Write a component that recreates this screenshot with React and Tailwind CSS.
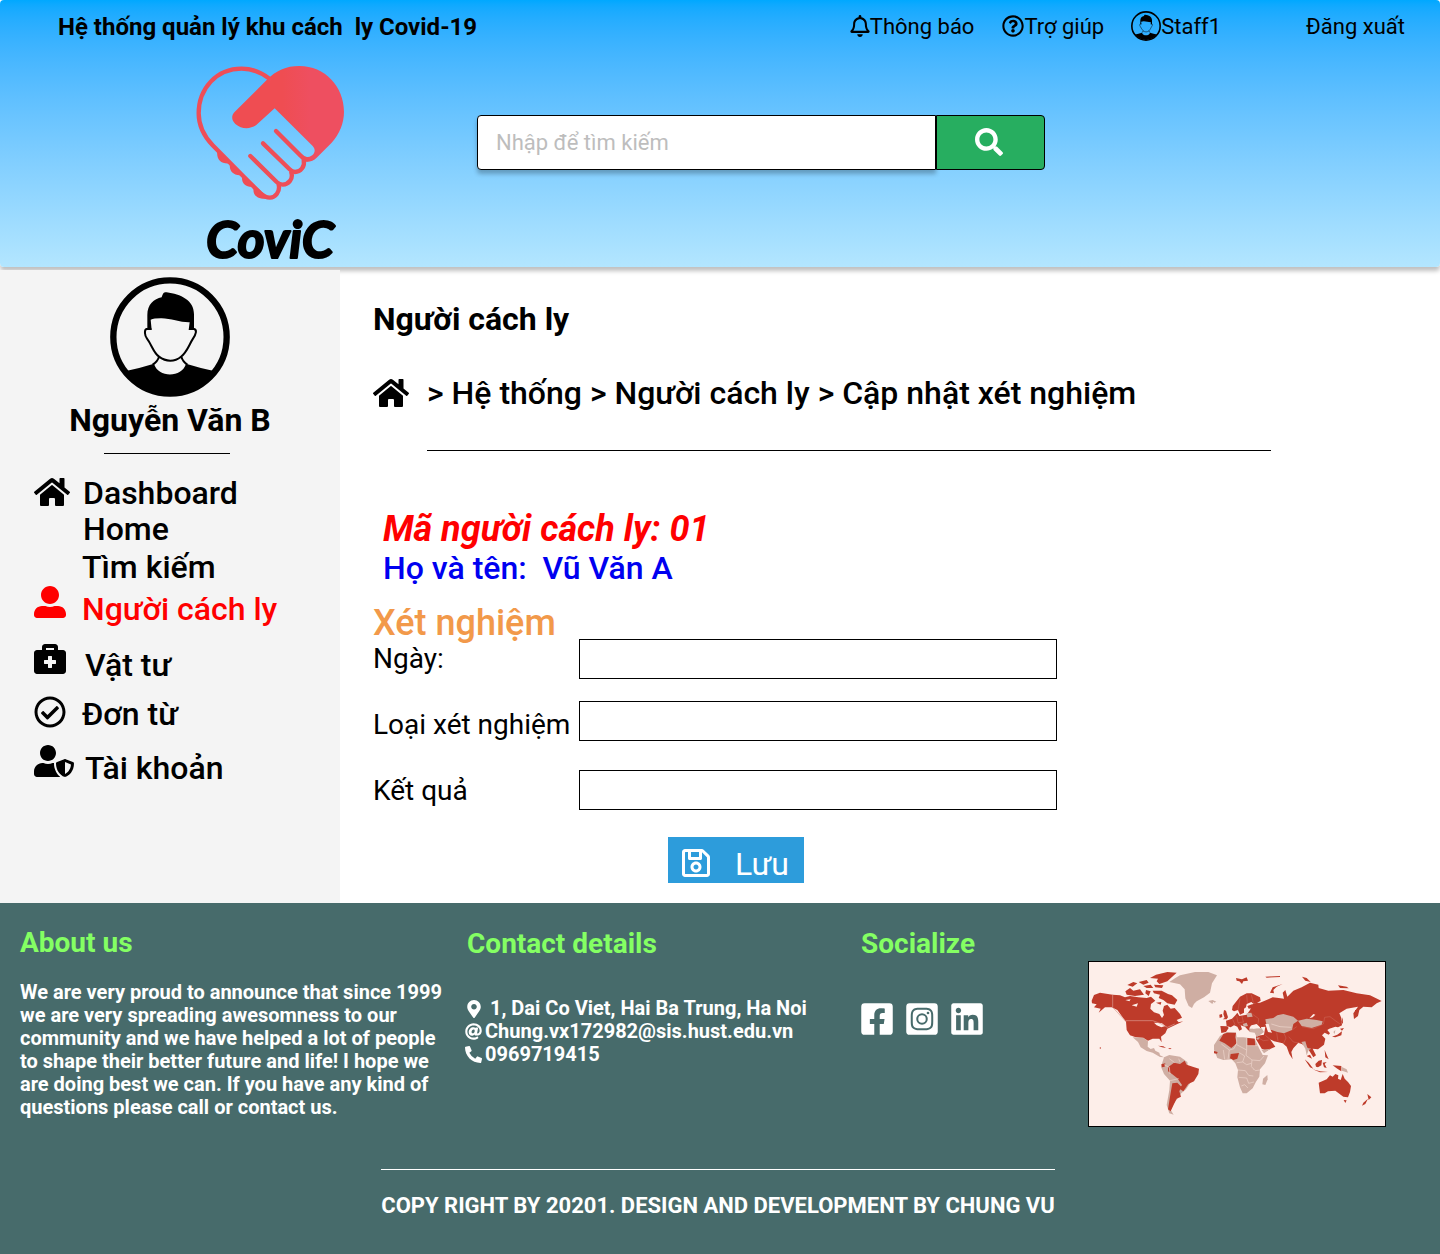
import {
  FaAt,
  FaBriefcaseMedical,
  FaFacebookSquare,
  FaHome,
  FaInstagramSquare,
  FaLinkedin,
  FaMapMarkerAlt,
  FaPhoneAlt,
  FaRegBell,
  FaRegCheckCircle,
  FaRegQuestionCircle,
  FaRegSave,
  FaSearch,
  FaUserAlt,
  FaUserShield,
} from "react-icons/fa";

function Avatar({ className }) {
  return (
    <svg viewBox="60 36 360 360" className={className} aria-hidden="true">
      <circle cx="240" cy="216" r="170" fill="none" stroke="#000" strokeWidth="19" />
      <path d="M172 195V150C172 118 192 102 215 97C219 84 222 81 230 82C272 88 312 105 312 148V195H296L299 172C272 173 240 159 212 160Q192 160 182 164L185 195Z" />
      <path
        d="M184 192H170C162 194 164 212 171 221C186 241 190 262 207 275C228 291 254 291 273 275C292 260 296 241 309 221C318 208 322 194 312 192H298M207 275Q203 289 188 299M274 275Q278 289 292 299"
        fill="none"
        stroke="#000"
        strokeWidth="6"
      />
      <path d="M108 318Q150 309 192 296C204 339 276 339 288 296Q330 309 372 318A164 164 0 0 1 108 318Z" />
    </svg>
  );
}

function Logo() {
  return (
    <svg viewBox="0 12 540 639" className="h-[213px] w-[180px] shrink-0 overflow-visible" role="img" aria-label="CoviC">
      <defs>
        <linearGradient id="hands" x1="0" x2="1">
          <stop offset="0.45" stopColor="#ef4d52" />
          <stop offset="0.7" stopColor="#ee4f60" />
        </linearGradient>
      </defs>
      <path
        fill="url(#hands)"
        d="M163 187L260 90C288 62 318 48 358 48C435 48 492 110 492 185C492 220 478 252 455 278L410 323C402 332 390 336 378 335L378 322C400 322 412 303 398 288L284 175L228 226C210 238 184 238 166 222C154 211 154 197 163 187Z"
      />
      <g fill="none" stroke="#ee4e58" strokeWidth="13" strokeLinecap="round">
        <path d="M268 86C245 68 215 56 185 56C110 56 56 115 56 190C56 230 73 260 98 286L240 429Q255 443 270 443C286 443 301 425 296 404" />
        <path d="M288 243L362 317Q370 327 382 328" />
        <path d="M249 280L328 357Q336 365 345 366C361 366 376 350 371 330" />
        <path d="M211 318L290 396Q299 404 308 404C326 403 340 387 334 368" />
      </g>
      <path
        fill="#ef4d55"
        d="M112 300C108 328 122 343 150 340C146 363 160 379 187 375C182 398 196 413 222 410C214 437 236 451 270 445L246 425Z"
      />
      <text
        x="270"
        y="624"
        textAnchor="middle"
        className="font-['Lato',sans-serif] text-[156px] font-bold italic"
        stroke="#000"
        strokeWidth="6"
        strokeLinejoin="round"
      >
        CoviC
      </text>
    </svg>
  );
}

function WorldMap() {
  return (
    <svg
      viewBox="27 36 888 492"
      className="block h-[166px] w-[298px] border border-black bg-[#fdeee9]"
      role="img"
      aria-label="World map"
    >
      <defs>
        <filter id="coast" x="0" y="0" width="1" height="1" filterUnits="objectBoundingBox">
          <feTurbulence type="fractalNoise" baseFrequency="0.35" numOctaves="2" seed="4" />
          <feDisplacementMap in="SourceGraphic" scale="4" xChannelSelector="R" yChannelSelector="G" />
        </filter>
      </defs>
      <g filter="url(#coast)">
        <rect x="27" y="36" width="888" height="492" fill="#fdeee9" />
        <g fill="#cfaea3">
          <path d="M268 96L286 84L300 76L345 66L385 66L411 76L396 100L390 128L372 142L350 154L342 162L336 174L326 168L316 145L314 118L300 103Z" />
          <path d="M385 153L398 150L409 155L396 161Z" />
          <path d="M158 262L190 263L204 274L203 290L212 297L222 294L226 302L238 308L240 316L252 322L240 321L218 308L200 303L182 292L174 276Z" />
          <path d="M252 322L268 315L300 320L322 336L330 400L318 418L304 430L285 455L272 480L281 494L268 490L260 465L268 420L270 392L252 372L243 350Z" />
          <path d="M402 300L402 285L420 258L440 246L468 248L470 262L490 262L524 266L538 296L548 315L564 316L555 340L540 358L538 380L528 395L518 415L500 430L488 430L480 412L472 382L474 360L466 340L455 328L430 330L412 324Z" />
          <path d="M562 375L563 388L556 405L547 403L549 386Z" />
        </g>
        <g fill="#be3b2b">
          <path d="M35 152L42 135L60 128L98 134L120 136L135 142L150 138L175 142L200 144L213 140L226 152L213 162L211 176L222 187L238 192L246 204L252 195L248 182L252 168L262 164L272 176L284 174L300 192L306 203L290 210L296 217L310 214L284 226L262 236L256 250L243 260L245 277L238 266L218 266L204 272L190 263L165 261L150 256L140 240L138 215L125 198L112 180L95 172L75 172L56 188L62 176L42 172L50 163L36 160Z" />
          <path d="M290 68L262 66L228 74L210 84L234 86L230 94L238 102L262 94Z" />
          <path d="M218 122L245 122L264 132L276 136L292 150L284 164L262 160L250 150L236 144L240 134L222 130Z" />
          <path d="M136 124L150 114L160 122L180 118L192 134L165 138L140 134ZM142 105L160 96L172 100L158 110ZM176 96L200 90L206 98L190 104ZM190 108L212 104L220 114L200 114ZM198 120L212 124L206 138L196 130ZM222 104L250 106L246 114L226 112ZM228 158L244 156L242 164Z" />
          <path d="M234 287L250 289L258 294L246 292ZM264 294L275 295L270 298Z" />
          <path d="M264 352L282 338L300 342L314 332L320 344L338 350L357 356L355 372L342 394L325 402L310 424L298 416L306 405L292 385L276 372L264 364Z" />
          <path d="M277 400L292 398L304 410L298 424L303 440L290 446L282 462L272 484L264 478L270 440Z" />
          <path d="M244 343L256 340L254 350L246 352Z" />
          <path d="M418 272L430 252L442 248L468 248L466 262L470 280L454 294L434 280Z" />
          <path d="M502 264L524 266L526 287L502 287Z" />
          <path d="M452 312L477 309L472 326L460 330L450 325ZM402 303L413 306L411 311L402 310Z" />
          <path d="M421 228L442 229L446 234L438 246L424 249ZM428 208L434 204L430 192L432 180L438 182L444 202L440 208ZM418 194L426 192L427 201L419 204Z" />
          <path d="M456 180L458 168L480 140L500 130L515 130L540 142L542 152L530 160L518 160L514 156L500 162L498 172L492 176L492 188L480 194L474 180L462 184Z" />
          <path d="M502 168L518 162L520 174L506 176ZM468 84L486 88L500 82L504 92L490 94L486 102L478 94L470 92Z" />
          <path d="M438 212L456 206L466 196L472 188L478 198L500 194L510 180L520 160L540 158L565 148L578 142L596 144L612 146L608 128L616 120L622 140L640 122L665 112L690 98L715 104L716 114L745 122L790 120L830 130L870 136L905 153L890 160L875 172L850 170L838 180L834 198L822 207L820 190L834 170L800 176L778 190L784 204L786 226L774 232L766 230L748 236L742 240L750 250L746 254L734 248L726 256L736 266L732 284L714 298L698 296L708 316L700 322L690 306L680 290L665 282L655 278L640 295L634 306L638 328L628 312L620 290L608 280L582 274L570 268L586 290L560 302L545 296L528 268L528 258L552 254L556 230L540 232L530 222L515 226L508 234L512 246L504 240L495 230L482 226L486 238L478 242L472 230L462 226L452 232L440 228Z" />
          <path d="M570 128L578 112L608 102L590 110L580 120L582 130ZM666 80L680 84L692 96L676 92ZM774 106L800 110L806 115L780 114ZM556 80L600 78L600 81L560 83Z" />
          <path d="M788 202L789 222L784 216ZM780 236L792 234L786 242ZM786 244L784 256L766 262L756 260L772 254Z" />
          <path d="M674 328L686 338L700 356L690 352ZM698 358L720 364L744 366L720 367ZM706 342L716 332L726 330L724 346L714 352L708 350ZM728 338L740 336L734 342L740 354L732 352ZM758 346L784 348L784 364L772 356ZM734 300L738 310L746 328L736 322ZM680 318L690 314L696 326Z" />
          <path d="M716 398L740 388L750 376L758 380L766 372L775 376L774 386L782 390L788 372L794 386L804 396L813 408L810 426L804 442L790 440L776 430L766 422L744 424L734 430L720 430ZM791 450L800 451L796 459ZM862 432L874 442L866 450ZM864 446L856 462L846 467L850 458Z" />
          <circle cx="61" cy="294" r="2" />
        </g>
        <g fill="#cfaea3">
          <path d="M508 236L545 235L552 246L544 252L530 262L524 248L508 246Z" />
          <path d="M500 190L514 188L518 200L502 202ZM488 222L500 218L504 228L492 230Z" />
          <path d="M556 208L580 204L592 196L610 192L640 200L654 212L640 222L636 240L612 250L592 246L575 240L562 238Z" />
          <path d="M654 212L680 206L710 210L728 214L725 224L695 234L665 228Z" />
          <path d="M544 299L572 296L552 310ZM664 276L676 274L682 294L694 296L686 300L680 316L676 296ZM784 350L800 358L804 368L786 362ZM760 246L766 240L764 252Z" />
          <path d="M528 264L540 262L534 270Z" />
        </g>
        <g fill="#fdeee9">
          <path d="M556 222L566 222L570 236L576 248L564 246ZM510 228L528 224L538 232L520 236ZM706 194L698 202L688 205L700 192ZM222 218L246 220L256 228L244 232L230 226ZM155 166L174 160L170 170ZM136 150L152 148L148 154Z" />
        </g>
        <path
          d="M98 134V172M138 212H218L240 220L262 232L284 222M138 215L98 172"
          fill="none"
          stroke="#dd9b8f"
          strokeWidth="2"
        />
        <path
          d="M424 282L448 300L462 296L470 280M470 262V284L500 300V264M500 287H534M430 300L434 328M448 300L444 328M478 308L494 318L488 336L470 338M500 300L498 316L516 330L540 332L552 318M516 330L514 350L526 362L540 360M474 360L496 362L506 376L520 378M476 382L500 384L506 400L522 396M484 408L494 404L504 414M488 336L500 344L514 340M252 344L268 352L270 372M270 392L296 386M268 326L284 338M296 326L300 336M574 222L600 230L634 232"
          fill="none"
          stroke="#eed6cd"
          strokeWidth="2"
        />
        <path
          d="M458 208L466 226M470 198L474 218L492 216M486 198L490 216M474 218L482 226M514 190L536 206L534 222M480 146L474 180M500 134L502 158M514 134L520 158M556 256L570 268M590 248L594 274M612 250L618 264L610 282M626 260L640 276L664 280M636 240L650 230M666 230L700 236L730 222L734 202L750 200L766 212L780 222M532 262L550 272L566 270"
          fill="none"
          stroke="#d98577"
          strokeWidth="1"
        />
      </g>
    </svg>
  );
}

const menu = [
  { label: "Dashboard", Icon: FaHome, size: 36, row: "mt-[21px] h-9", text: "leading-9", col: "-mt-px w-[49px]" },
  { label: "Home", row: "h-9", text: "leading-9", col: "w-[49px]" },
  { label: "Tìm kiếm", row: "mt-px h-[38px]", text: "leading-[38px]", col: "w-12" },
  { label: "Người cách ly", Icon: FaUserAlt, size: 32, active: true, row: "h-[42px] items-end", text: "leading-[38px]", col: "mb-auto w-12" },
  { label: "Vật tư", Icon: FaBriefcaseMedical, size: 32, row: "mt-[14px] h-[42px] items-end", text: "leading-[38px]", col: "mb-auto w-[51px]" },
  { label: "Đơn từ", Icon: FaRegCheckCircle, size: 32, row: "mt-[11px] h-[38px]", text: "leading-[38px]", col: "mt-px w-12" },
  { label: "Tài khoản", Icon: FaUserShield, size: 40, row: "mt-2 h-[46px] items-end", text: "leading-[38px]", col: "mb-auto w-[51px]" },
];

export default function App() {
  return (
    <div className="flex min-h-screen flex-col bg-white font-['Roboto',sans-serif] text-black">
      <header className="relative flex h-[267px] flex-col rounded bg-linear-to-b from-[#00a8ff] to-[#b3e6ff] shadow-[0_4px_4px_rgba(0,0,0,0.25)]">
        <div className="flex h-[54px] items-center pr-[35px] pl-[58px] text-[22px]">
          <h1 className="text-2xl font-bold whitespace-pre">Hệ thống quản lý khu cách  ly Covid-19</h1>
          <nav className="mb-0.5 ml-auto flex items-center">
            <a href="#notifications" className="flex items-center">
              <FaRegBell size={22} className="-mx-px" />
              Thông báo
            </a>
            <a href="#help" className="ml-7 flex items-center">
              <FaRegQuestionCircle size={22} />
              Trợ giúp
            </a>
            <a href="#profile" className="ml-[27px] flex items-center">
              <Avatar className="size-[30px]" />
              Staff1
            </a>
            <a href="#logout" className="ml-[85px]">Đăng xuất</a>
          </nav>
        </div>
        <div className="flex items-start pl-[180px]">
          <Logo />
          <form className="mt-[61px] ml-[117px] flex h-[55px]" role="search">
            <input
              type="search"
              aria-label="Tìm kiếm"
              placeholder="Nhập để tìm kiếm"
              className="w-[459px] rounded-l border border-black bg-white px-[18px] text-[22px] shadow-[0_4px_4px_rgba(0,0,0,0.25)] placeholder:text-[#bdbdbd]"
            />
            <button
              type="button"
              aria-label="Tìm"
              className="flex w-[109px] items-center justify-center rounded-r border border-black bg-[#27ae60] pr-1 pb-0.5 text-white"
            >
              <FaSearch size={28} />
            </button>
          </form>
        </div>
      </header>

      <div className="relative mt-[3px] flex">
        <aside className="w-[340px] shrink-0 bg-[#f4f4f4] pt-[7px]">
          <Avatar className="mx-auto size-[120px]" />
          <p className="mt-1 text-center text-[32px] leading-[38px] font-bold">Nguyễn Văn B</p>
          <hr className="mt-[14px] ml-[104px] w-[126px] border-black" />
          <nav className="flex flex-col pl-[34px] text-[32px] font-medium">
            {menu.map(({ label, Icon, size, active, row, text, col }) => (
              <a
                key={label}
                href={"#" + label}
                className={`flex ${row} ${active ? "text-[#ff0000]" : ""}`}
              >
                <span className={`flex h-9 shrink-0 items-start ${col}`}>
                  {Icon && <Icon size={size} />}
                </span>
                <span className={text}>{label}</span>
              </a>
            ))}
          </nav>
        </aside>

        <main className="flex-1 pt-[30px] pr-[169px] pb-5 pl-[33px]">
          <h2 className="text-[32px] leading-[38px] font-bold">Người cách ly</h2>
          <div className="mt-9 flex items-center text-[32px] leading-[38px] font-medium">
            <a href="#home" aria-label="Home" className="mr-[18px]">
              <FaHome size={36} />
            </a>
            <p>&gt; Hệ thống &gt; Người cách ly &gt; Cập nhật xét nghiệm</p>
          </div>
          <hr className="mt-[38px] ml-[54px] border-black" />
          <p className="mt-[57px] pl-[10px] text-4xl leading-[42px] font-bold text-[#ff0000] italic">
            Mã người cách ly: 01
          </p>
          <p className="pl-[10px] text-[32px] leading-9 font-medium whitespace-pre text-[#0000f0]">
            Họ và tên:  Vũ Văn A
          </p>
          <h3 className="mt-[21px] text-4xl leading-8 font-medium text-[#f2994a]">Xét nghiệm</h3>
          <form className="text-[28px] leading-[33px]">
            <div className="flex items-center">
              <label htmlFor="date" className="w-[206px] pb-0.5">Ngày:</label>
              <input id="date" type="text" className="h-10 w-[478px] border border-black px-2" />
            </div>
            <div className="mt-[22px] flex items-end">
              <label htmlFor="kind" className="w-[206px]">Loại xét nghiệm</label>
              <input id="kind" type="text" className="h-10 w-[478px] border border-black px-2" />
            </div>
            <div className="mt-[29px] flex items-center">
              <label htmlFor="result" className="w-[206px]">Kết quả</label>
              <input id="result" type="text" className="h-10 w-[478px] border border-black px-2" />
            </div>
            <button
              type="button"
              className="mt-[27px] ml-[295px] flex h-[46px] w-[136px] items-end bg-[#2d9cdb] pl-3 text-[32px] leading-[38px] text-white"
            >
              <FaRegSave size={32} className="mr-[23px] mb-1" />
              Lưu
            </button>
          </form>
        </main>
      </div>

      <footer className="flex-1 bg-[#476b6b] text-white">
        <div className="flex h-[266px] items-start pt-[23px] pl-5 text-xl leading-[23px] font-bold">
          <section className="w-[447px] shrink-0">
            <h4 className="text-[28px] leading-[33px] text-[#84ff63]">About us</h4>
            <p className="mt-[22px] w-[430px]">
              We are very proud to announce that since 1999 we are very spreading awesomness to our community and we
              have helped a lot of people to shape their better future and life! I hope we are doing best we can. If
              you have any kind of questions please call or contact us.
            </p>
          </section>
          <section className="mt-px w-[394px] shrink-0">
            <h4 className="text-[28px] leading-[33px] text-[#84ff63]">Contact details</h4>
            <ul className="-ml-0.5 pt-[37px]">
              <li className="flex items-center">
                <FaMapMarkerAlt size={18} className="mr-[7px]" />
                1, Dai Co Viet, Hai Ba Trung, Ha Noi
              </li>
              <li className="flex items-center">
                <FaAt size={17} className="mr-[3px]" />
                Chung.vx172982@sis.hust.edu.vn
              </li>
              <li className="flex items-center">
                <FaPhoneAlt size={17} className="mr-[3px]" />
                0969719415
              </li>
            </ul>
          </section>
          <section className="mt-px w-[227px] shrink-0">
            <h4 className="text-[28px] leading-[33px] text-[#84ff63]">Socialize</h4>
            <div className="-ml-0.5 flex gap-[9px] pt-[41px]">
              <a href="#facebook" aria-label="Facebook"><FaFacebookSquare size={36} /></a>
              <a href="#instagram" aria-label="Instagram"><FaInstagramSquare size={36} /></a>
              <a href="#linkedin" aria-label="LinkedIn"><FaLinkedin size={36} /></a>
            </div>
          </section>
          <div className="mt-[35px]">
            <WorldMap />
          </div>
        </div>
        <div className="flex justify-center pr-1">
          <p className="border-t border-white pt-[23px] pb-9 text-[22px] leading-[26px] font-bold">
            COPY RIGHT BY 20201. DESIGN AND DEVELOPMENT BY CHUNG VU
          </p>
        </div>
      </footer>
    </div>
  );
}
